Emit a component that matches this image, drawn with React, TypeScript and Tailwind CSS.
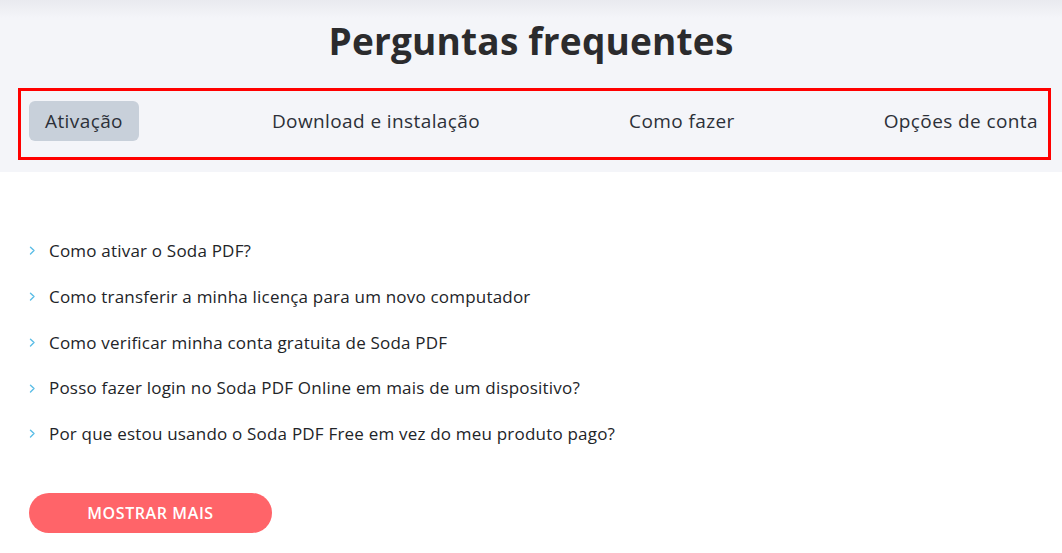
const tabs = ["Ativação", "Download e instalação", "Como fazer", "Opções de conta"];

const questions = [
  "Como ativar o Soda PDF?",
  "Como transferir a minha licença para um novo computador",
  "Como verificar minha conta gratuita de Soda PDF",
  "Posso fazer login no Soda PDF Online em mais de um dispositivo?",
  "Por que estou usando o Soda PDF Free em vez do meu produto pago?",
];

function Chevron() {
  return (
    <svg width="7" height="9" viewBox="0 0 7 9" fill="none" className="shrink-0">
      <path d="M1.5 1.2L5 4.6L1.5 8" stroke="#5bbde6" strokeWidth="1.4" strokeLinecap="round" strokeLinejoin="round" />
    </svg>
  );
}

export default function App() {
  return (
    <div className="min-h-[553px] w-[1062px] bg-white font-['Open_Sans',sans-serif] text-[#262a31]">
      <section className="h-[172px] bg-[linear-gradient(to_bottom,#e9eaef_0px,#f4f5f9_18px)] pt-[18px]">
        <h1 className="text-center text-[37px] font-bold leading-[46px] tracking-[0.2px] text-[#2b2b2d]">
          Perguntas frequentes
        </h1>
        <div className="ml-[18px] mt-[24px] h-[72px] w-[1033px] border-[3px] border-[#ff0000] pt-[10px]">
          <div className="flex items-start justify-between pl-2">
            {tabs.map((t, i) => (
              <button
                key={t}
                className={`h-10 rounded-md px-4 text-[19px] leading-10 tracking-[0.4px] text-[#2c3038] ${
                  i === 0 ? "bg-[#c8d0da]" : ""
                } ${i === tabs.length - 1 ? "pr-[10px]" : ""}`}
              >
                {t}
              </button>
            ))}
          </div>
        </div>
      </section>

      <section className="pl-[29px] pt-[56px]">
        <ul>
          {questions.map((q) => (
            <li
              key={q}
              className="flex h-[45.75px] items-center gap-[13px] text-[17px] tracking-[0.2px] text-[#222428]"
            >
              <Chevron />
              <span>{q}</span>
            </li>
          ))}
        </ul>
        <button className="mt-[36px] h-10 w-[243px] rounded-full bg-[#ff6469] text-[16px] font-semibold tracking-[0.6px] text-white">
          MOSTRAR MAIS
        </button>
      </section>
    </div>
  );
}
